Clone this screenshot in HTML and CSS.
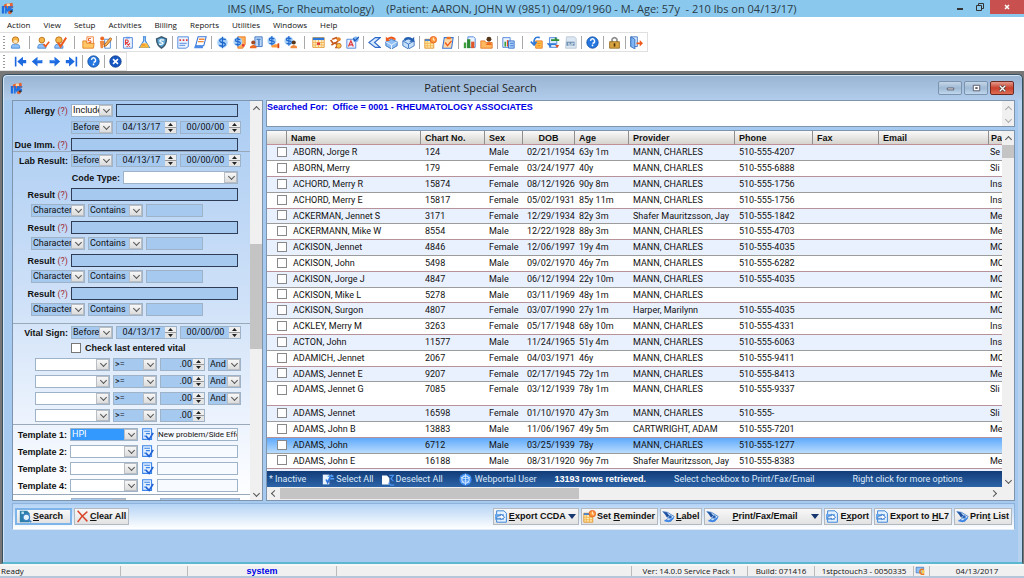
FILE: index.html
```html
<!DOCTYPE html>
<html lang="en">
<head>
<meta charset="utf-8">
<title>IMS - Patient Special Search</title>
<link rel="stylesheet" href="styles.css">
</head>
<body>
<svg class="sprite" aria-hidden="true">
  <symbol id="i-logo" viewBox="0 0 16 16"><path d="M3 5Q4 1 9 2L14 1 15 7 11 8H5z" fill="#e8602c"/><path d="M7 2h4v3H7z" fill="#fbd9a8"/><path d="M1 5h3v9H1zM5 14V5h2l1 4 1-4h2v9H9v-4l-1 3-1-3v4z" fill="#1f6fe0"/><path d="M15 6h-3v3h2v2h-3" fill="none" stroke="#1f6fe0" stroke-width="1.6"/><circle cx="11" cy="13" r="2.2" fill="#e8602c"/><circle cx="12.500" cy="11.500" r="1.500" fill="#333"/></symbol>
  <symbol id="i-person" viewBox="0 0 16 16"><path d="M3 15v-2q0-3 5-3t5 3v2z" fill="#8fc0f5" stroke="#3c7fd0"/><circle cx="8" cy="5" r="4" fill="#f6b548" stroke="#b56b14"/><path d="M5.500 6q2.500-2 5 0v2q-2.500 2-5 0z" fill="#fde4b8"/></symbol>
  <symbol id="i-personcheck" viewBox="0 0 16 16"><path d="M1 15v-2q0-3 5-3t5 3v2z" fill="#8fc0f5" stroke="#3c7fd0"/><circle cx="6" cy="5" r="3.500" fill="#f6b548" stroke="#b56b14"/><path d="M8 10l2.500 3L15 7" fill="none" stroke="#ee5a1c" stroke-width="2"/></symbol>
  <symbol id="i-personcheck2" viewBox="0 0 16 16"><path d="M1 15v-2q0-3 5-3t5 3v2z" fill="#8fc0f5" stroke="#3c7fd0"/><circle cx="6" cy="5" r="4" fill="#f6b548" stroke="#b56b14"/><path d="M5 8l3 5 7-11" fill="none" stroke="#ee5a1c" stroke-width="2.400"/></symbol>
  <symbol id="i-folder" viewBox="0 0 16 16"><path d="M6 1h8v10H6z" fill="#fff" stroke="#ee7420"/><path d="M11 3H8v3h3v2H8" fill="none" stroke="#ee5a1c" stroke-width="1.200"/><path d="M1 6h4l1 3h9l-1 6H1z" fill="#ffc765" stroke="#e07a18"/></symbol>
  <symbol id="i-pencil" viewBox="0 0 16 16"><circle cx="4" cy="3" r="2.500" fill="#ee6a22"/><path d="M1 6h7v5H5v4H2z" fill="#f08a3c"/><path d="M7 4h7v11H7z" fill="#fff" stroke="#3c7fd0"/><path d="M6 13l1-3 7-8 2 2-7 8z" fill="#ffb84a" stroke="#9b4a12"/></symbol>
  <symbol id="i-rx" viewBox="0 0 16 16"><path d="M3 2h11v13H3z" fill="#eaf3ff" stroke="#3a78d8"/><path d="M6 1h5v2H6z" fill="#5b93e6"/><path d="M5.500 11V5h2.500q2 1.500 0 3H6l5 5M11 9l-4 4.500" fill="none" stroke="#e23c3c" stroke-width="1.300"/></symbol>
  <symbol id="i-flask" viewBox="0 0 16 16"><path d="M6 1h4M7 1v5L2 14h12L9 6V1" fill="#d8ebff" stroke="#3a84d8" stroke-width="1.300"/><path d="M5 9h6l3 5.500H2z" fill="#ffba3a"/><path d="M4.500 11h4" stroke="#ee7420"/></symbol>
  <symbol id="i-shield" viewBox="0 0 16 16"><path d="M8 0l7 3q0 9-7 13Q1 12 1 3z" fill="#3d5a70"/><path d="M8 2l5 2q0 7-5 9.500Q3 11 3 4z" fill="#5fa9d8"/><path d="M11 5q-5-1-5 1 0 1 2 1.500t2 1.500q-1 2-5 1" fill="none" stroke="#fff" stroke-width="1.500"/></symbol>
  <symbol id="i-doc" viewBox="0 0 16 16"><path d="M1 1h13v12l-3 2H1z" fill="#eaf3ff" stroke="#3a78d8"/><path d="M3 4h2v2H3zM7 4h2v2H7zM11 4h2v2h-2z" fill="#e23c3c"/><path d="M3 9h9M3 11.500h7" stroke="#3a78d8"/></symbol>
  <symbol id="i-notes" viewBox="0 0 16 16"><path d="M5 1h10l-3 11H2z" fill="#fff" stroke="#3a78d8" stroke-width="1.300"/><path d="M6 4h7M5 7h7" stroke="#ee8a3a" stroke-width="1.600"/><path d="M1 12h10v3H0z" fill="#4c8ce8"/></symbol>
  <symbol id="i-dollar" viewBox="0 0 16 16"><circle cx="8" cy="8" r="6.500" fill="#a9d2fa"/><path d="M12 4.500Q5 2 4.500 5.500 5 8 8 8t3.500 2.500Q11 14 4 11.500M8 1v14" fill="none" stroke="#1d66cc" stroke-width="1.600"/></symbol>
  <symbol id="i-dollarbook" viewBox="0 0 16 16"><path d="M6 1h9v9l-3 5H6z" fill="#ffb25a" stroke="#e4701a"/><circle cx="6" cy="7" r="5.500" fill="#a9d2fa"/><path d="M9 4.500Q3 2.500 3 5q0 2 3 2t3 2Q8.500 12 3 10M6 1v12" fill="none" stroke="#1d66cc" stroke-width="1.400"/><path d="M11 10h3v3h-3z" fill="#e23c3c"/></symbol>
  <symbol id="i-billing" viewBox="0 0 16 16"><path d="M6 1h9v12H6z" fill="#bcd9fa" stroke="#2d68b8"/><path d="M8 4h5M11 5v7" stroke="#2d68b8" stroke-width="1.500"/><circle cx="4" cy="8" r="2.500" fill="#a04a24"/><path d="M0 15v-2q4-4 8 0v2z" fill="#ee6a22"/></symbol>
  <symbol id="i-dollarhand" viewBox="0 0 16 16"><circle cx="6" cy="6" r="5.500" fill="#a9d2fa"/><path d="M9 3.500Q3 1.500 3 4q0 2 3 2t3 2Q8.500 11 3 9M6 0v12" fill="none" stroke="#1d66cc" stroke-width="1.400"/><path d="M5 12l5-2h5v4H6z" fill="#ff9a3c"/><path d="M13 9h2v6h-2z" fill="#d8451c"/></symbol>
  <symbol id="i-dollarperson" viewBox="0 0 16 16"><circle cx="6" cy="6" r="5.500" fill="#a9d2fa"/><path d="M9 3.500Q3 1.500 3 4q0 2 3 2t3 2Q8.500 11 3 9M6 0v12" fill="none" stroke="#1d66cc" stroke-width="1.400"/><circle cx="12" cy="8" r="2.500" fill="#553618"/><path d="M8 15v-2q4-4 8 0v2z" fill="#f08a3c"/></symbol>
  <symbol id="i-calendar" viewBox="0 0 16 16"><path d="M1 2h14v12H1z" fill="#fff4d0" stroke="#e08a1c"/><path d="M1 2h14v3H1z" fill="#2d78d8"/><path d="M4 5v9M8 5v9M12 5v9M1 8h14M1 11h14" stroke="#f2b34a"/><path d="M6 8h4v3H6z" fill="#e23c3c"/></symbol>
  <symbol id="i-run" viewBox="0 0 16 16"><path d="M4 4l5-2 3 3-4 4 3 2-3 4M8 8l-5 3M2 5l3 4" fill="none" stroke="#c65a1a" stroke-width="2"/><circle cx="12" cy="4" r="2.500" fill="#e8862c"/><circle cx="12" cy="12" r="3" fill="#ffc04a" stroke="#b5651a"/></symbol>
  <symbol id="i-acheck" viewBox="0 0 16 16"><path d="M1 4h11v11H1z" fill="#eaf3ff" stroke="#3a78d8"/><path d="M3 13l3-7 3 7M4 11h4" fill="none" stroke="#e23c3c" stroke-width="1.500"/><circle cx="12" cy="4" r="3.500" fill="#7fb4f4"/><path d="M9 3l2 3 5-5" fill="none" stroke="#1d55b0" stroke-width="1.500"/></symbol>
  <symbol id="i-send" viewBox="0 0 16 16"><path d="M15 2H9L1 8l8 6h6l-7-6z" fill="#d8ebff" stroke="#2d68c8" stroke-width="1.400"/></symbol>
  <symbol id="i-box" viewBox="0 0 16 16"><path d="M1 7l7-3 7 3v5l-7 4-7-4z" fill="#8fc0f5" stroke="#2d68b8"/><path d="M1 7l7 4 7-4M8 11v5" fill="none" stroke="#fff"/><path d="M1 1v5h5L4.500 4.500Q8 2 11 5l3-1Q9-2 3 2.500z" fill="#ee5a1c"/></symbol>
  <symbol id="i-boxblue" viewBox="0 0 16 16"><path d="M1 6l7-3 7 3v6l-7 4-7-4z" fill="#c5e0fb" stroke="#2d68b8"/><path d="M1 6l7 4 7-4M8 10v5" fill="none" stroke="#2d68b8"/><path d="M15 1v6H9l2-2Q7 3 4 6L2 4q4-5 11-1z" fill="#2560b0"/></symbol>
  <symbol id="i-calclock" viewBox="0 0 16 16"><path d="M1 4h11v11H1z" fill="#ffe9b0" stroke="#e08a1c"/><path d="M1 4h11v2H1z" fill="#2d78d8"/><path d="M4 6v9M8 6v9M1 9h11M1 12h11" stroke="#f2b34a"/><circle cx="11.500" cy="4.500" r="4" fill="#ff9a3c" stroke="#e05a1c"/><path d="M11.500 2v3h2" stroke="#fff" fill="none"/></symbol>
  <symbol id="i-clip" viewBox="0 0 16 16"><path d="M4 2h11l-2 13H2z" fill="#ffd9a8" stroke="#3a78d8" stroke-width="1.300"/><path d="M7 1h5v3H7z" fill="#ee7420"/><path d="M5 8l3 4 5-6" fill="none" stroke="#ee5a1c" stroke-width="1.600"/></symbol>
  <symbol id="i-chart" viewBox="0 0 16 16"><path d="M6 1h7l2 2v11H6z" fill="#eaf3ff" stroke="#3a78d8"/><path d="M1 8h3v7H1z" fill="#3da03d"/><path d="M5 4h4v11H5z" fill="#2e8c34"/><path d="M10 7h4v8h-4z" fill="#e0562c"/></symbol>
  <symbol id="i-folderperson" viewBox="0 0 16 16"><path d="M1 6h5l1 2h8v7H1z" fill="#ffb860" stroke="#e4701a"/><circle cx="11" cy="4" r="3" fill="#553618"/><path d="M7 11q4-6 8 0z" fill="#ee6a22"/></symbol>
  <symbol id="i-report" viewBox="0 0 16 16"><path d="M1 2h9v12H1z" fill="#eaf3ff" stroke="#3a78d8"/><path d="M3 7h2v6H3z" fill="#3da03d"/><path d="M6 5h2v8H6z" fill="#e0562c"/><path d="M8 6h7v9H8z" fill="#a9cffa" stroke="#2d68c8"/><path d="M10 9h4M10 12h4" stroke="#2d68c8"/></symbol>
  <symbol id="i-import" viewBox="0 0 16 16"><path d="M7 6h8v9H7z" fill="#ffc04a" stroke="#e4701a"/><path d="M9 9h4M9 12h4" stroke="#e4701a"/><path d="M12 2Q6 0 5 6v3M1 7l4 4 3-4" fill="none" stroke="#2d78d8" stroke-width="2"/></symbol>
  <symbol id="i-sync" viewBox="0 0 16 16"><path d="M3 2h9v12H3z" fill="#d8ebff" stroke="#3a78d8"/><path d="M5 5h7l-2-3M15 5h-3" stroke="#2e8c34" stroke-width="2" fill="none"/><path d="M11 10H2l3 3" stroke="#2d78d8" stroke-width="2" fill="none"/><path d="M10 11h5l-2.500 4z" fill="#e0562c"/></symbol>
  <symbol id="i-card" viewBox="0 0 16 16"><path d="M3 1h10l2 2v12H2z" fill="#dbe7f2" stroke="#b5c4d2"/><path d="M3 7h10v5H3z" fill="#6f93b6"/><path d="M5 9h2M9 9h3M5 11h6" stroke="#fff"/></symbol>
  <symbol id="i-help" viewBox="0 0 16 16"><circle cx="8" cy="8" r="7" fill="#2476e0" stroke="#124c9e"/><path d="M5.500 6Q6 3.500 8 3.500T10.500 6 8 9M8 10.500v2" fill="none" stroke="#fff" stroke-width="1.800"/></symbol>
  <symbol id="i-lock" viewBox="0 0 16 16"><path d="M5 8V4q3-4 6 0v4" fill="none" stroke="#8d8d8d" stroke-width="2"/><path d="M2 7h12v8H2z" fill="#d8a441" stroke="#8f641b"/><path d="M8 9v4" stroke="#4a3208" stroke-width="2"/></symbol>
  <symbol id="i-exit" viewBox="0 0 16 16"><path d="M1 1h8v12H1z" fill="#d8ebff" stroke="#2d68b8"/><path d="M1 1l5 3v12l-5-3z" fill="#7fb4f4" stroke="#2d68b8"/><path d="M8 8h4V5l4 4-4 4v-3H8z" fill="#ee5a1c"/></symbol>
  <symbol id="i-right" viewBox="0 0 16 16"><path d="M2 6h6V2l7 6-7 6v-4H2z" fill="#1d6ae0"/><path d="M3 7h6" stroke="#79b4ff"/></symbol>
  <symbol id="i-left" viewBox="0 0 16 16"><path d="M14 6H8V2L1 8l7 6v-4h6z" fill="#1d6ae0"/><path d="M13 7H7" stroke="#79b4ff"/></symbol>
  <symbol id="i-first" viewBox="0 0 16 16"><path d="M1 2h2v12H1zM15 6h-4V2L4 8l7 6v-4h4z" fill="#1d6ae0"/></symbol>
  <symbol id="i-last" viewBox="0 0 16 16"><path d="M13 2h2v12h-2zM1 6h4V2l7 6-7 6v-4H1z" fill="#1d6ae0"/></symbol>
  <symbol id="i-close" viewBox="0 0 16 16"><circle cx="8" cy="8" r="7" fill="#1558c4" stroke="#0e3c8a"/><path d="M5 5l6 6M11 5l-6 6" stroke="#fff" stroke-width="2"/></symbol>
  <symbol id="i-list" viewBox="0 0 16 16"><path d="M2 1h11v13H2z" fill="#e3efff" stroke="#3a84e8" stroke-width="1.300"/><path d="M4 4h7M6 7h5M4 10h3" stroke="#3a84e8" stroke-width="1.500"/><path d="M6 10l4 4 5-8" fill="none" stroke="#1f62d8" stroke-width="2"/></symbol>
  <symbol id="i-search" viewBox="0 0 16 16"><path d="M1 1h9l3 3v11H1z" fill="#2b7fa8"/><path d="M3 2h3v3H3z" fill="#bfe2f5"/><circle cx="9" cy="9" r="4" fill="#e6f4ff" stroke="#3d83c4" stroke-width="1.500"/><path d="M12 12l3 3" stroke="#3d83c4" stroke-width="2"/></symbol>
  <symbol id="i-x" viewBox="0 0 16 16"><path d="M2 1q5 6 12 13M14 2Q7 7 2 15" fill="none" stroke="#d8452a" stroke-width="1.800"/></symbol>
  <symbol id="i-export" viewBox="0 0 16 16"><path d="M2 1h9l3 3v11H2z" fill="#e6f2ff" stroke="#3a84d8" stroke-width="1.200"/><path d="M0 5h11v7H0z" fill="#68a8ec"/><path d="M2 11q0-4 5-4V5l5 4-5 3v-2q-3 0-5 1z" fill="#fff" stroke="#1f62b8" stroke-width=".8"/></symbol>
  <symbol id="i-print" viewBox="0 0 16 16"><path d="M1 2l6 1 8 5-4 6-7-1 4-3z" fill="#cfe4fa" stroke="#3a78c8"/><path d="M2 2l4 1 3 4-3 2z" fill="#1e4f9c"/><circle cx="10" cy="8.500" r="2" fill="#2b66b8"/><path d="M3 13l5 1 6-4" stroke="#3a84e8" stroke-width="2" fill="none"/></symbol>
  <symbol id="i-select" viewBox="0 0 16 16"><path d="M1 2h8v12H1z" fill="#e9f3ff"/><path d="M7 4h7M10 7h5M7 10l5-8" stroke="#5ea6f5" stroke-width="1.800"/><path d="M5 8l2 4 4-8" stroke="#2a70d8" stroke-width="2" fill="none"/></symbol>
  <symbol id="i-deselect" viewBox="0 0 16 16"><path d="M0 3h6l3 3v8H0z" fill="#fff"/><path d="M9 3h5l-3 4 3 3M8 12l3 3h4" stroke="#4a92f0" stroke-width="1.600" fill="none"/></symbol>
  <symbol id="i-portal" viewBox="0 0 16 16"><circle cx="8" cy="8" r="7.500" fill="#3f8cf2"/><circle cx="8" cy="8" r="4.500" fill="none" stroke="#cfe5ff" stroke-width="1.500"/><path d="M2 5q6 4 12 0M3 12q5-5 10 0M8 1v14" stroke="#cfe5ff" fill="none"/></symbol>
  <symbol id="i-msg" viewBox="0 0 16 16"><path d="M1 2h12v9H1z" fill="#8fc0f5" stroke="#2d68b8"/><path d="M13 6q-6-2-6 3t7 4" fill="none" stroke="#ee7a1c" stroke-width="2.500"/><circle cx="12" cy="9" r="2.500" fill="#ffcf4a"/></symbol>
</svg>

<div class="app">
  <header class="titlebar">
    <svg class="ico logo"><use href="#i-logo"/></svg>
    <h1>IMS (IMS, For Rheumatology)<span>(Patient: AARON, JOHN W (9851) 04/09/1960 - M- Age: 57y&nbsp; - 210 lbs on 04/13/17)</span></h1>
    <div class="winbtns">
      <button type="button" aria-label="Minimize"><svg viewBox="0 0 12 12"><path d="M3 8h6" stroke="#333" stroke-width="2"/></svg></button>
      <button type="button" aria-label="Restore"><svg viewBox="0 0 12 12"><path d="M2.500 4.500h5v5h-5zM4.500 4V2.500h5v5H8" fill="none" stroke="#333"/></svg></button>
      <button type="button" class="close" aria-label="Close"><svg viewBox="0 0 12 12"><path d="M4 4l4 4M8 4L4 8" stroke="#fff" stroke-width="1.500"/></svg></button>
    </div>
  </header>

  <nav class="menu">
    <button type="button">Action</button><button type="button">View</button><button type="button">Setup</button><button type="button">Activities</button><button type="button">Billing</button><button type="button">Reports</button><button type="button">Utilities</button><button type="button">Windows</button><button type="button">Help</button>
  </nav>

  <div class="toolbar main-tools">
    <i class="grip"></i>
    <svg class="ico"><use href="#i-person"/></svg><i class="sep wide"></i>
    <svg class="ico"><use href="#i-personcheck"/></svg><svg class="ico"><use href="#i-personcheck2"/></svg><i class="sep wide"></i>
    <svg class="ico"><use href="#i-folder"/></svg><svg class="ico"><use href="#i-pencil"/></svg><i class="sep"></i>
    <svg class="ico"><use href="#i-rx"/></svg><svg class="ico"><use href="#i-flask"/></svg><svg class="ico"><use href="#i-shield"/></svg><i class="sep"></i>
    <svg class="ico"><use href="#i-doc"/></svg><svg class="ico"><use href="#i-notes"/></svg><i class="sep"></i>
    <svg class="ico"><use href="#i-dollar"/></svg><svg class="ico"><use href="#i-dollarbook"/></svg><svg class="ico"><use href="#i-billing"/></svg><svg class="ico"><use href="#i-dollarhand"/></svg><svg class="ico"><use href="#i-dollarperson"/></svg><i class="sep wide"></i>
    <svg class="ico"><use href="#i-calendar"/></svg><svg class="ico"><use href="#i-run"/></svg><svg class="ico"><use href="#i-acheck"/></svg><i class="sep"></i>
    <svg class="ico"><use href="#i-send"/></svg><svg class="ico"><use href="#i-box"/></svg><svg class="ico"><use href="#i-boxblue"/></svg><i class="sep"></i>
    <svg class="ico"><use href="#i-calclock"/></svg><svg class="ico"><use href="#i-clip"/></svg><i class="sep"></i>
    <svg class="ico"><use href="#i-chart"/></svg><svg class="ico"><use href="#i-folderperson"/></svg><i class="sep"></i>
    <svg class="ico"><use href="#i-report"/></svg><i class="sep wide"></i>
    <svg class="ico"><use href="#i-import"/></svg><svg class="ico"><use href="#i-sync"/></svg><svg class="ico"><use href="#i-card"/></svg><i class="sep"></i>
    <svg class="ico"><use href="#i-help"/></svg><i class="sep"></i>
    <svg class="ico"><use href="#i-lock"/></svg><i class="sep"></i>
    <svg class="ico"><use href="#i-exit"/></svg>
  </div>
  <div class="toolbar nav-tools">
    <i class="grip"></i>
    <svg class="ico"><use href="#i-first"/></svg><svg class="ico"><use href="#i-left"/></svg><svg class="ico"><use href="#i-right"/></svg><svg class="ico"><use href="#i-last"/></svg><i class="sep"></i>
    <svg class="ico"><use href="#i-help"/></svg><i class="sep"></i>
    <svg class="ico"><use href="#i-close"/></svg>
  </div>

  <main class="workspace">
    <section class="window">
      <header class="wintitle">
        <svg class="ico"><use href="#i-logo"/></svg>
        <h2>Patient Special Search</h2>
        <div class="mdibtns">
          <button type="button" aria-label="Minimize window"><svg viewBox="0 0 12 12"><path d="M2.500 5.500h7v2h-7z" fill="#fff" stroke="#556"/></svg></button>
          <button type="button" aria-label="Maximize window"><svg viewBox="0 0 12 12"><path d="M2.500 2.500h7v6h-7zM5 5h2v1H5z" fill="#fff" stroke="#556"/></svg></button>
          <button type="button" class="close" aria-label="Close window"><svg viewBox="0 0 12 12"><path d="M3 3l6 6M9 3L3 9" stroke="#433" stroke-width="3"/><path d="M3 3l6 6M9 3L3 9" stroke="#fff" stroke-width="1.500"/></svg></button>
        </div>
      </header>

      <div class="content">
        <form class="criteria">
          <div class="fields">
            <div class="group">
              <div class="row"><label for="al">Allergy <em>(?)</em></label><span class="combo white w42"><select id="al"><option>Include</option></select></span><input class="dark end" aria-label="Allergy name"></div>
              <div class="row"><label></label><span class="combo w42"><select aria-label="Allergy period"><option>Before</option></select></span><span class="spin date"><input value="04/13/17" aria-label="From"></span><span class="spin date"><input value="00/00/00" aria-label="To"></span></div>
              <div class="row"><label for="im">Due Imm. <em>(?)</em></label><input id="im" class="dark end"></div>
            </div>
            <div class="group">
              <div class="row"><label for="lr">Lab Result:</label><span class="combo w42"><select id="lr"><option>Before</option></select></span><span class="spin date"><input value="04/13/17" aria-label="From"></span><span class="spin date"><input value="00/00/00" aria-label="To"></span></div>
              <div class="row"><label class="code" for="ct">Code Type:</label><span class="combo white end"><select id="ct"><option></option></select></span></div>
              <div class="pair"><div class="row"><label for="r1">Result <em>(?)</em></label><input id="r1" class="dark end"></div>
              <div class="row sub"><span class="combo w54"><select aria-label="Type"><option>Character</option></select></span><span class="combo w55"><select aria-label="Operator"><option>Contains</option></select></span><input class="w57" aria-label="Value"></div></div>
              <div class="pair"><div class="row"><label for="r2">Result <em>(?)</em></label><input id="r2" class="dark end"></div>
              <div class="row sub"><span class="combo w54"><select aria-label="Type"><option>Character</option></select></span><span class="combo w55"><select aria-label="Operator"><option>Contains</option></select></span><input class="w57" aria-label="Value"></div></div>
              <div class="pair"><div class="row"><label for="r3">Result <em>(?)</em></label><input id="r3" class="dark end"></div>
              <div class="row sub"><span class="combo w54"><select aria-label="Type"><option>Character</option></select></span><span class="combo w55"><select aria-label="Operator"><option>Contains</option></select></span><input class="w57" aria-label="Value"></div></div>
              <div class="pair last"><div class="row"><label for="r4">Result <em>(?)</em></label><input id="r4" class="dark end"></div>
              <div class="row sub"><span class="combo w54"><select aria-label="Type"><option>Character</option></select></span><span class="combo w55"><select aria-label="Operator"><option>Contains</option></select></span><input class="w57" aria-label="Value"></div></div>
            </div>
            <div class="group">
              <div class="row"><label for="vs">Vital Sign:</label><span class="combo w42"><select id="vs"><option>Before</option></select></span><span class="spin date"><input value="04/13/17" aria-label="From"></span><span class="spin date"><input value="00/00/00" aria-label="To"></span></div>
              <div class="row check"><input type="checkbox" id="lv"><label for="lv">Check last entered vital</label></div>
              <div class="row vit"><span class="combo white w75"><select aria-label="Vital"><option></option></select></span><span class="combo w44"><select aria-label="Operator"><option>&gt;=</option></select></span><span class="spin num"><input value=".00" aria-label="Value"></span><span class="combo w33"><select aria-label="Join"><option>And</option></select></span></div>
              <div class="row vit"><span class="combo white w75"><select aria-label="Vital"><option></option></select></span><span class="combo w44"><select aria-label="Operator"><option>&gt;=</option></select></span><span class="spin num"><input value=".00" aria-label="Value"></span><span class="combo w33"><select aria-label="Join"><option>And</option></select></span></div>
              <div class="row vit"><span class="combo white w75"><select aria-label="Vital"><option></option></select></span><span class="combo w44"><select aria-label="Operator"><option>&gt;=</option></select></span><span class="spin num"><input value=".00" aria-label="Value"></span><span class="combo w33"><select aria-label="Join"><option>And</option></select></span></div>
              <div class="row vit"><span class="combo white w75"><select aria-label="Vital"><option></option></select></span><span class="combo w44"><select aria-label="Operator"><option>&gt;=</option></select></span><span class="spin num"><input value=".00" aria-label="Value"></span></div>
            </div>
            <div class="group tpl">
              <div class="row"><label for="t1">Template 1:</label><span class="combo picked w68"><select id="t1"><option>HPI</option></select></span><svg class="ico"><use href="#i-list"/></svg><input class="clear end" value="New problem/Side Effe" aria-label="Template 1 text"></div>
              <div class="row"><label for="t2">Template 2:</label><span class="combo white w68"><select id="t2"><option></option></select></span><svg class="ico"><use href="#i-list"/></svg><input class="clear end" aria-label="Template 2 text"></div>
              <div class="row"><label for="t3">Template 3:</label><span class="combo white w68"><select id="t3"><option></option></select></span><svg class="ico"><use href="#i-list"/></svg><input class="clear end" aria-label="Template 3 text"></div>
              <div class="row"><label for="t4">Template 4:</label><span class="combo white w68"><select id="t4"><option></option></select></span><svg class="ico"><use href="#i-list"/></svg><input class="clear end" aria-label="Template 4 text"></div>
            </div>
            <div class="group next">
              <div class="row"><label></label><span class="combo w55"><select aria-label="Next period"><option></option></select></span><input class="push w80" aria-label="Next value"></div>
            </div>
          </div>
          <div class="vscroll"><i class="arr up"></i><i class="thumb mid"></i><i class="arr down"></i></div>
        </form>

        <div class="results">
          <div class="searched"><p>Searched For:&nbsp; Office = 0001 - RHEUMATOLOGY ASSOCIATES</p><div class="vscroll faint"><i class="arr up"></i><i class="arr down"></i></div></div>
          <div class="grid">
            <div class="sheet">
              <div class="clip">
              <table>
                <colgroup><col class="c-ck"><col class="c-name"><col class="c-chart"><col class="c-sex"><col class="c-dob"><col class="c-age"><col class="c-prov"><col class="c-phone"><col class="c-fax"><col class="c-email"><col></colgroup>
                <thead><tr><th></th><th>Name</th><th>Chart No.</th><th>Sex</th><th class="dob">DOB</th><th>Age</th><th>Provider</th><th>Phone</th><th>Fax</th><th>Email</th><th>Pa</th></tr></thead>
                <tbody id="patients"></tbody>
              </table>
              </div>
              <div class="band"><span>* Inactive</span><button type="button"><svg class="ico"><use href="#i-select"/></svg>Select All</button><button type="button"><svg class="ico"><use href="#i-deselect"/></svg>Deselect All</button><span class="portal"><svg class="ico"><use href="#i-portal"/></svg>Webportal User</span><b>13193 rows retrieved.</b><span class="hint">Select checkbox to Print/Fax/Email</span><span class="hint2">Right click for more options</span></div>
            </div>
            <div class="vscroll"><i class="arr up"></i><i class="thumb top"></i><i class="arr down"></i></div>
            <div class="hscroll"><i class="arr left"></i><i class="thumb"></i><i class="arr right"></i></div>
          </div>
        </div>

        <footer class="actions">
          <button type="button" class="btn default"><svg class="ico"><use href="#i-search"/></svg><span><u>S</u>earch</span></button>
          <button type="button" class="btn"><svg class="ico"><use href="#i-x"/></svg><span><u>C</u>lear All</span></button>
          <button type="button" class="btn push"><svg class="ico"><use href="#i-export"/></svg><span><u>E</u>xport CCDA</span><i class="tri"></i></button>
          <button type="button" class="btn"><svg class="ico"><use href="#i-calclock"/></svg><span>Set <u>R</u>eminder</span></button>
          <button type="button" class="btn"><svg class="ico"><use href="#i-print"/></svg><span><u>L</u>abel</span></button>
          <button type="button" class="btn broad"><svg class="ico"><use href="#i-print"/></svg><span><u>P</u>rint/Fax/Email</span><i class="tri"></i></button>
          <button type="button" class="btn"><svg class="ico"><use href="#i-export"/></svg><span>E<u>x</u>port</span></button>
          <button type="button" class="btn"><svg class="ico"><use href="#i-export"/></svg><span>Export to <u>H</u>L7</span></button>
          <button type="button" class="btn"><svg class="ico"><use href="#i-print"/></svg><span>Prin<u>t</u> List</span></button>
        </footer>
      </div>
    </section>
  </main>

  <footer class="status"><span class="s-ready">Ready</span><span class="s-gap"></span><b class="s-user">system</b><span class="s-fill"></span><span class="s-ver">Ver: 14.0.0 Service Pack 1</span><span class="s-build">Build: 071416</span><span class="s-host">1stpctouch3 - 0050335</span><span class="s-ico"><svg class="ico"><use href="#i-msg"/></svg></span><span class="s-date">04/13/2017</span></footer>
</div>
<script src="app.js"></script>
</body>
</html>
```
FILE: styles.css
```css
* { box-sizing: border-box; }
html, body { height: 100%; margin: 0; }
body { overflow: hidden; background: #fff; color: #111; font: 9px/13px Roboto, "Liberation Sans", sans-serif; }
button, input, select { font: inherit; color: inherit; margin: 0; padding: 0; border: 0; background: none; border-radius: 0; outline: 0; min-width: 0; }
h1, h2, p { margin: 0; font-weight: normal; }
.sprite { display: none; }
.ico { width: 13px; height: 13px; flex: none; display: block; }

.app { height: 100vh; display: flex; flex-direction: column; }
.titlebar { flex: none; height: 17px; background: #8ac9ed; display: flex; align-items: center; padding-left: 1px; }
.titlebar h1 { flex: 1; padding-left: 60px; text-align: center; font: 11px/17px "Open Sans", "Noto Sans", sans-serif; color: #2b3b48; white-space: nowrap; }
.titlebar h1 span { margin-left: 12px; }
.winbtns { display: flex; height: 14px; align-self: flex-start; }
.winbtns button { width: 20px; height: 14px; display: grid; place-items: center; }
.winbtns svg { width: 12px; height: 12px; }
.winbtns .close { width: 34px; background: #c8504f; }

.menu { flex: none; height: 15px; display: flex; gap: 13px; padding: 0 7px; font: 8px/14px "Open Sans", "Noto Sans", sans-serif; }
.toolbar { flex: none; align-self: flex-start; display: flex; align-items: center; gap: 4px; border: 1px solid #e0e0e0; border-left: 0; padding: 0 4px 0 3px; }
.main-tools { height: 20px; }
.nav-tools { height: 19px; }
.grip { width: 2px; height: 13px; background: repeating-linear-gradient(#999 0 1px, #fff 1px 3px); }
.sep { width: 1px; height: 13px; background: #a8a8a8; }
.sep.wide { margin: 0 3px; }
.nav-tools .grip { margin-right: 5px; }

.workspace { flex: 1; min-height: 0; display: flex; background: #777; padding: 3px 1px 0 2px; }
.window { flex: 1; min-width: 0; display: flex; flex-direction: column; border: 1px solid #35505e; border-bottom: 2px solid #5cb8d0; border-radius: 5px 5px 0 0; background: #a6c9f0; padding: 0 7px 0 9px; box-shadow: inset 1px 1px 0 #d7e6f5, inset -4px 0 0 #b6d2ee; }
.wintitle { flex: none; height: 24px; margin: 1px -7px 0 -8px; padding: 0 8px 0 6px; display: flex; align-items: center; border-radius: 4px 4px 0 0; background: linear-gradient(#9ab5d4, #b1cdeb); }
.wintitle h2 { flex: 1; text-align: center; font: 11px/22px "Open Sans", "Noto Sans", sans-serif; color: #222; }
.mdibtns { display: flex; gap: 2px; }
.mdibtns button { width: 24px; height: 14px; border: 1px solid #7c93ad; border-radius: 2px; background: linear-gradient(#c5d6e8, #9fb9d4 50%, #c0d8ee); display: grid; place-items: center; }
.mdibtns svg { width: 11px; height: 11px; }
.mdibtns .close { border-color: #6b2a22; background: linear-gradient(#e49a8c, #c8402c 50%, #de6e54); }

.content { flex: 1; min-height: 0; display: grid; grid-template-columns: 251px 1fr; grid-template-rows: 1fr 27px; gap: 2px 3px; padding-bottom: 32px; }
.criteria { display: flex; min-height: 0; border: 1px solid #7f95ad; background: linear-gradient(#a9cbf2, #cfe1f8 50%, #f1f6fe 85%, #fff); }
.fields { flex: 1; min-width: 0; height: 0; min-height: 100%; overflow: hidden; }
.group { display: flex; flex-direction: column; gap: 4px; padding: 2px 12px 2px 0; border-bottom: 1px solid #9aa9ba; }
.group:first-child { padding: 3px 12px 0 0; }
.row { display: flex; height: 13px; gap: 3px; }
.row label { width: 55px; flex: none; text-align: right; font: bold 9px/14px "Liberation Sans", Arial, sans-serif; white-space: nowrap; }
.row label.code { width: 107px; }
.row em { font: 9px/13px Roboto, "Liberation Sans", sans-serif; color: #a02c34; }
.row input { height: 13px; border: 1px solid #9fb3c8; background: #a6c9f0; padding: 0 2px; }
.row input.dark { border-color: #2e3d55; }
.row .end { flex: 1; }
.row input.clear { background: #f7faff; padding: 0; font-size: 8px; }
.pair { display: flex; flex-direction: column; gap: 3px; }
.pair.last { padding-bottom: 5px; }
.sub { padding-left: 18px; }
.w33 { width: 33px; } .w42 { width: 42px; } .w44 { width: 44px; } .w54 { width: 54px; } .w55 { width: 55px; } .w57 { width: 57px; } .w68 { width: 68px; } .w75 { width: 75px; } .w80 { width: 80px; }

.combo { position: relative; flex: none; display: flex; height: 13px; border: 1px solid #9fb3c8; background: #a6c9f0; }
.combo.white { background: #fff; }
.combo select { appearance: none; width: 100%; height: 11px; line-height: 11px; padding: 0 11px 0 1px; }
.combo::after { content: ""; position: absolute; right: 0; top: 0; bottom: 0; width: 11px; border: 1px solid #b9bec4; background: linear-gradient(#f7f7f7, #dcdcdc); pointer-events: none; }
.combo::before { content: ""; position: absolute; z-index: 1; right: 3px; top: 2px; width: 4px; height: 4px; border: solid #555; border-width: 0 1px 1px 0; transform: rotate(45deg); pointer-events: none; }
.combo.picked select { background: #3399ff; color: #fff; }
.spin { position: relative; flex: none; display: flex; }
.spin.date { width: 61px; }
.spin.num { width: 45px; }
.spin input { width: 100%; text-align: center; padding-right: 12px; }
.spin.num input { text-align: right; }
.spin::after { content: ""; position: absolute; right: 1px; top: 1px; bottom: 1px; width: 11px; background: linear-gradient(#eee 5px, #999 5px 6px, #e4e4e4 6px); }
.spin::before { content: ""; position: absolute; z-index: 1; right: 4px; top: 2px; width: 5px; height: 9px; background: #222; clip-path: polygon(50% 0, 100% 33%, 0 33%, 0 67%, 100% 67%, 50% 100%, 0 67%, 0 33%); }
.check { height: 11px; padding-left: 58px; gap: 4px; }
.check input { appearance: none; width: 10px; height: 10px; background: #fff; border: 1px solid #777; }
.check label { width: auto; line-height: 11px; }
.vit { padding-left: 22px; }
.tpl { padding: 3px 12px 2px 0; }
.tpl .row label { width: 54px; }
.next { padding: 3px 10px 0 0; }
.next .push { margin-left: auto; }

.vscroll { flex: none; width: 12px; background: #f0f0f0; display: flex; flex-direction: column; align-items: center; padding: 4px 0; }
.arr { width: 5px; height: 5px; flex: none; border: solid #555; border-width: 1px 0 0 1px; transform: rotate(45deg); }
.arr.up { margin-top: 2px; }
.arr.down { transform: rotate(225deg); margin-top: auto; }
.arr.left { transform: rotate(-45deg); }
.arr.right { transform: rotate(135deg); margin-left: auto; }
.thumb { background: #c4c4c4; flex: none; }
.thumb.mid { width: 100%; height: 105px; margin-top: 132px; }
.thumb.top { width: 100%; height: 13px; margin-top: 3px; }
.faint .arr { border-color: #aaa; }

.results { display: flex; flex-direction: column; gap: 3px; min-width: 0; min-height: 0; }
.searched { flex: none; height: 27px; display: flex; background: #fff; border: 1px solid #7f95ad; }
.searched p { flex: 1; font: bold 9px/12px "Liberation Sans", Arial, sans-serif; color: #0000e6; }
.grid { flex: 1; min-height: 0; display: grid; grid-template: minmax(0, 1fr) 13px / minmax(0, 1fr) 12px; border: 1px solid #7f95ad; background: #fff; }
.sheet { display: flex; flex-direction: column; min-height: 0; }
.clip { flex: 1; min-height: 0; overflow: hidden; }
table { width: 100%; table-layout: fixed; border-collapse: separate; border-spacing: 0; }
.c-ck { width: 20px; } .c-name { width: 134px; } .c-chart { width: 64px; } .c-sex { width: 38px; } .c-dob { width: 52px; } .c-age { width: 54px; } .c-prov { width: 106px; } .c-phone { width: 78px; } .c-fax { width: 66px; } .c-email { width: 110px; }
th { height: 14px; padding: 0 0 0 4px; text-align: left; font: bold 9px/12px "Liberation Sans", Arial, sans-serif; white-space: nowrap; overflow: hidden; background: linear-gradient(#fafafa, #d6d3ce); border-right: 1px solid #8f8f8f; border-bottom: 1px solid #c08f98; }
th.dob { text-align: center; padding: 0; }
th:last-child { padding-left: 2px; border-right: 0; }
td { height: 16px; padding: 0 0 0 4px; line-height: 15px; white-space: nowrap; overflow: hidden; border-bottom: 1px solid #9c9c9c; }
tr:nth-child(5n) td { height: 15px; line-height: 14px; }
tbody tr:nth-child(odd) td { background: #e9f0fe; }
tbody tr:nth-child(even) td { background: #fff; border-bottom-color: #b8929a; }
td:nth-child(2) { padding-left: 6px; }
td:last-child { padding-left: 1px; }
tbody tr.tall td { height: 24px; padding-bottom: 8px; }
tbody tr.current td { background: linear-gradient(#5ea9fb, #b9dcfd); }
td:first-child { padding: 0 0 2px 10px; line-height: 0; }
td input { appearance: none; display: block; width: 10px; height: 10px; border: 1px solid #888; background: #fff; }
.band { flex: none; height: 16px; display: flex; align-items: center; padding-left: 2px; color: #dce9fa; background: linear-gradient(#123c78, #2c64a8); white-space: nowrap; }
.band > * { flex: none; }
.band button, .band .portal { display: flex; gap: 1px; align-items: center; }
.band button { margin-left: 16px; }
.band button + button { margin-left: 8px; }
.band .portal { margin-left: 16px; gap: 3px; }
.band b { font: bold 9px/13px "Liberation Sans", Arial, sans-serif; color: #fff; margin-left: 18px; }
.hint { margin-left: 28px; }
.hint2 { margin-left: 38px; }
.hscroll { grid-column: 1 / -1; display: flex; align-items: center; background: #f0f0f0; padding: 0 18px 0 5px; }
.hscroll .thumb { width: 299px; height: 11px; margin-left: 3px; }

.actions { grid-column: 1 / -1; display: flex; align-items: center; gap: 2px; padding: 0 2px; border: 1px solid #8fb2da; border-bottom-color: #dfeaf6; background: linear-gradient(#b4d3f5, #fff); }
.btn { display: flex; align-items: center; justify-content: center; gap: 1px; height: 17px; padding: 0 2px 0 1px; border: 1px solid #b4b9c0; background: linear-gradient(#f8f8f8, #e2e2e2); font: bold 9px/13px "Liberation Sans", Arial, sans-serif; white-space: nowrap; }
.btn.default { border: 2px solid #7db4ea; padding: 0 7px 0 2px; }
.btn.push { margin-left: auto; }
.btn.broad { width: 118px; justify-content: space-between; }
.tri { border: 4px solid transparent; border-top: 5px solid #17386e; border-bottom: 0; margin-left: 1px; }

.status { flex: none; height: 14px; display: flex; border-top: 2px solid #f7f7f7; border-bottom: 2px solid #b4c6d8; background: #f0f0f0; font: 8px/10px "Open Sans", "Noto Sans", sans-serif; white-space: nowrap; }
.status > * { border-right: 1px solid #bbb; text-align: center; }
.status .s-ready { width: 121px; text-align: left; padding-left: 1px; }
.s-gap { width: 67px; }
.status .s-user { width: 149px; color: #0000e6; font: bold 9px/10px "Liberation Sans", Arial, sans-serif; }
.s-fill { flex: 1; }
.s-ver { width: 116px; } .s-build { width: 67px; } .s-host { width: 99px; } .s-ico { width: 16px; }
.s-ico .ico { height: 10px; }
.status .s-date { width: 94px; border-right: 0; }
```
FILE: app.js
```js
const patients = [
  ["ABORN, Jorge R", "124", "Male", "02/21/1954", "63y 1m", "MANN, CHARLES", "510-555-4207", "Se"],
  ["ABORN, Merry", "179", "Female", "03/24/1977", "40y", "MANN, CHARLES", "510-555-6888", "Sli"],
  ["ACHORD, Merry R", "15874", "Female", "08/12/1926", "90y 8m", "MANN, CHARLES", "510-555-1756", "Ins"],
  ["ACHORD, Merry E", "15817", "Female", "05/02/1931", "85y 11m", "MANN, CHARLES", "510-555-1756", "Ins"],
  ["ACKERMAN, Jennet S", "3171", "Female", "12/29/1934", "82y 3m", "Shafer Mauritzsson, Jay", "510-555-1842", "Me"],
  ["ACKERMANN, Mike W", "8554", "Male", "12/22/1928", "88y 3m", "MANN, CHARLES", "510-555-4703", "Me"],
  ["ACKISON, Jennet", "4846", "Female", "12/06/1997", "19y 4m", "MANN, CHARLES", "510-555-4035", "MO"],
  ["ACKISON, John", "5498", "Male", "09/02/1970", "46y 7m", "MANN, CHARLES", "510-555-6282", "MO"],
  ["ACKISON, Jorge J", "4847", "Male", "06/12/1994", "22y 10m", "MANN, CHARLES", "510-555-4035", "MO"],
  ["ACKISON, Mike L", "5278", "Male", "03/11/1969", "48y 1m", "MANN, CHARLES", "", "MO"],
  ["ACKISON, Surgon", "4807", "Female", "03/07/1990", "27y 1m", "Harper, Marilynn", "510-555-4035", "MO"],
  ["ACKLEY, Merry M", "3263", "Female", "05/17/1948", "68y 10m", "MANN, CHARLES", "510-555-4331", "Ins"],
  ["ACTON, John", "11577", "Male", "11/24/1965", "51y 4m", "MANN, CHARLES", "510-555-6063", "Ins"],
  ["ADAMICH, Jennet", "2067", "Female", "04/03/1971", "46y", "MANN, CHARLES", "510-555-9411", "MO"],
  ["ADAMS, Jennet E", "9207", "Female", "02/17/1945", "72y 1m", "MANN, CHARLES", "510-555-8413", "Me"],
  ["ADAMS, Jennet G", "7085", "Female", "03/12/1939", "78y 1m", "MANN, CHARLES", "510-555-9337", "Sli", "tall"],
  ["ADAMS, Jennet", "16598", "Female", "01/10/1970", "47y 3m", "MANN, CHARLES", "510-555-", "Sli"],
  ["ADAMS, John B", "13883", "Male", "11/06/1967", "49y 5m", "CARTWRIGHT, ADAM", "510-555-7201", "Me"],
  ["ADAMS, John", "6712", "Male", "03/25/1939", "78y", "MANN, CHARLES", "510-555-1277", "", "current"],
  ["ADAMS, John E", "16188", "Male", "08/31/1920", "96y 7m", "Shafer Mauritzsson, Jay", "510-555-8383", "Me"],
  ["", "", "", "", "", "", "", ""]
];

const body = document.getElementById("patients");
for (const [name, chart, sex, dob, age, provider, phone, payer, state] of patients) {
  const row = body.insertRow();
  if (state) row.className = state;
  const box = document.createElement("input");
  box.type = "checkbox";
  box.setAttribute("aria-label", "Select " + (name || "next patient"));
  row.insertCell().append(box);
  for (const text of [name, chart, sex, dob, age, provider, phone, "", "", payer]) {
    row.insertCell().textContent = text;
  }
}
```
